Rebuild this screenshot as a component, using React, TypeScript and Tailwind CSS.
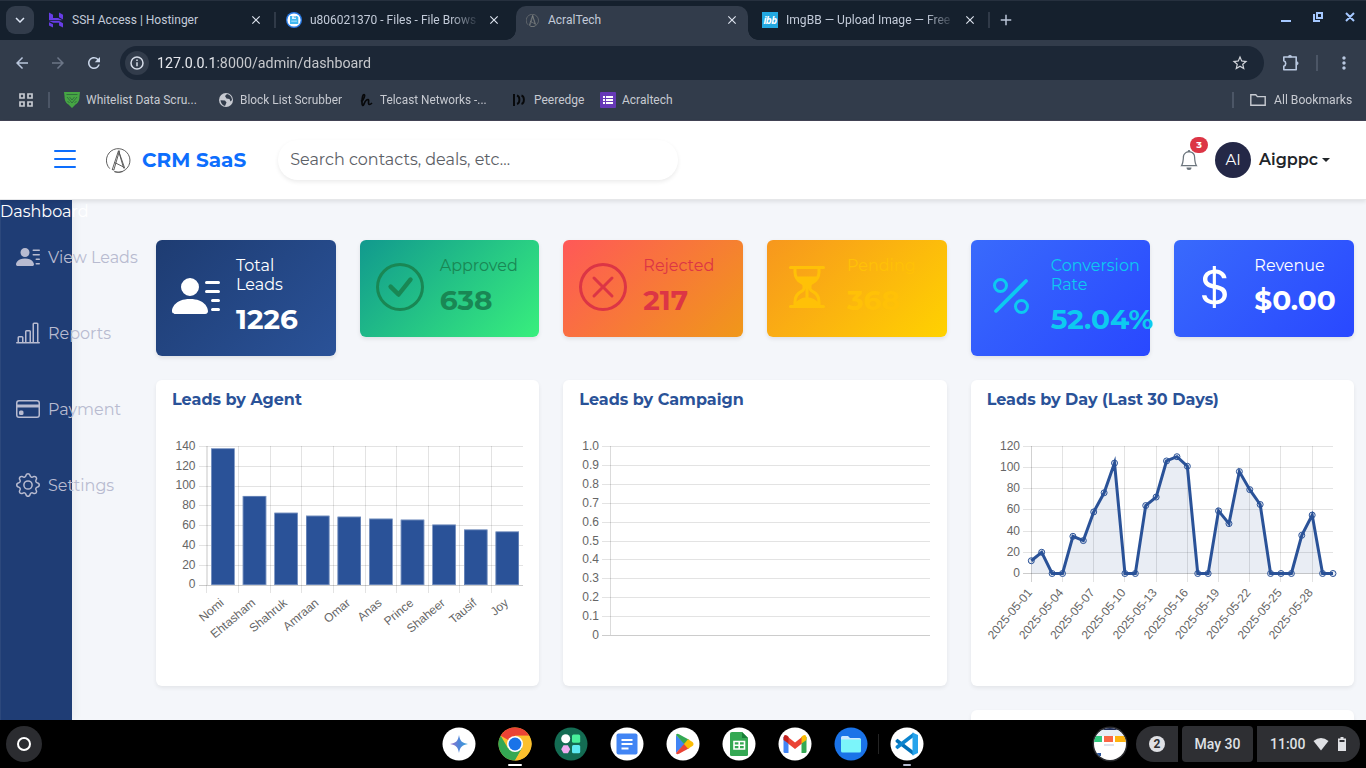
import { useLayoutEffect, useRef, type ReactNode } from "react";
import {
  BsPersonLinesFill, BsBarChartLine, BsCreditCard, BsGear, BsBell, BsList, BsCheckCircle,
  BsXCircle, BsHourglassSplit, BsPercent, BsCurrencyDollar,
} from "react-icons/bs";
import { MdArrowBack, MdArrowForward, MdRefresh, MdStarOutline, MdMoreVert, MdAdd, MdClose, MdExpandMore } from "react-icons/md";

/** Text stretched horizontally so that it takes exactly `w` pixels. */
function Fit({ w, className = "", children }: { w: number; className?: string; children: ReactNode }) {
  const ref = useRef<HTMLSpanElement>(null);
  useLayoutEffect(() => {
    const el = ref.current;
    if (el) el.style.transform = `scaleX(${w / el.offsetWidth})`;
  }, [w]);
  return (
    <span className="block shrink-0" style={{ width: w }}>
      <span ref={ref} className={`inline-block origin-left whitespace-nowrap ${className}`}>{children}</span>
    </span>
  );
}

/** Text at its natural width. */
const Txt = ({ children }: { children: ReactNode }) => <span className="block whitespace-nowrap">{children}</span>;

function AcralLogo({ className }: { className: string }) {
  return (
    <svg viewBox="0 0 24 24" className={className} fill="none" stroke="currentColor">
      <path d="M3.6 19.8A11.3 11.3 0 1 1 8 22.6" strokeWidth=".9" />
      <path d="M8.2 22.8a11.3 11.3 0 0 0 8-.2" strokeWidth=".8" />
      <path d="M6 20.8 12 2.6l5 17M7.5 21.2 13 2.5M12.2 3l5.8 16.6M8 13.8l8.8 4.4M5.8 20.6l2 .6" strokeWidth=".9" />
    </svg>
  );
}

const HostingerIcon = () => (
  <svg viewBox="0 0 16 16" className="size-4" fill="#673de6">
    <path d="M1 .5 5 2.7v3.2h5.2l4.3 2.4H1zM11 .5l4 2.2v4.8l-4-2.2zM1 8.9h10.2l3.8 2.3v4.3l-4-2.1v-2.7H5.2L1 8.9zM1 10.2l4 2.1v3.2l-4-2.1z" />
  </svg>
);
const FileBrowserIcon = () => (
  <svg viewBox="0 0 16 16" className="size-4">
    <circle cx="8" cy="8" r="8" fill="#2b7de9" /><circle cx="8" cy="8" r="6.6" fill="#fff" />
    <path d="M4 4h7l1.3 1.3V12H4z" fill="#41b8f0" /><path d="M6 4.3h4v2.6H6zM5.3 8.7h5.6v.7H5.3z" fill="#d8f2ff" /><path d="M8.6 4.6h.8V6h-.8z" fill="#1f70bd" />
  </svg>
);
const IbbIcon = () => (
  <span className="flex size-4 items-center justify-center bg-[#23a8e0] font-['Open_Sans',sans-serif] text-[10px] font-bold italic leading-none tracking-[-0.6px] text-white">ibb</span>
);

function Tab({ icon, title, w, fade }: { icon: ReactNode; title: string; w: number; fade?: boolean }) {
  return (
    <div className="flex h-6 w-[215px] items-center">
      <div className="flex w-4 shrink-0">{icon}</div>
      <div className={`ml-2 w-[168px] overflow-hidden text-[#c3cbd9] ${fade ? "[mask-image:linear-gradient(to_right,#000_140px,transparent_170px)]" : ""}`}>
        <Fit w={w}>{title}</Fit>
      </div>
      <MdClose className="ml-[9px] size-3.5 text-[#dde3ee]" />
    </div>
  );
}

function Browser() {
  return (
    <div className="h-[121px] shrink-0 border-b border-[#424354] bg-[#323c4b] font-[Roboto,sans-serif] text-xs text-[#c7cad1]">
      <div className="flex h-10 items-start border-t border-[#26303e] bg-[#15202d]">
        <div className="mt-[5px] ml-1.5 flex size-7 items-center justify-center rounded-[9px] bg-[#323c4b]">
          <MdExpandMore className="size-[18px] text-[#dde6f5]" />
        </div>
        <div className="mt-[7px] ml-3.5"><Tab icon={<HostingerIcon />} title="SSH Access | Hostinger" w={126} /></div>
        <div className="mt-[11px] ml-[11px] h-4 w-0.5 bg-[#303a48]" />
        <div className="mt-[7px] ml-[10px]"><Tab icon={<FileBrowserIcon />} title="u806021370 - Files - File Brows" w={166} fade /></div>
        <div className="ml-[5px] flex self-end">
          <div className="size-2.5 self-end bg-[radial-gradient(circle_at_0_0,#15202d_9.5px,#323c4b_10px)]" />
          <div className="h-[34px] w-[232px] rounded-t-[10px] bg-[#323c4b] pt-[2px] pl-2 text-[#e1e5ed]">
            <Tab icon={<AcralLogo className="ml-[2px] size-[13px] text-[#92938f]" />} title="AcralTech" w={53} />
          </div>
          <div className="size-2.5 self-end bg-[radial-gradient(circle_at_100%_0,#15202d_9.5px,#323c4b_10px)]" />
        </div>
        <div className="mt-[7px] ml-1"><Tab icon={<IbbIcon />} title="ImgBB — Upload Image — Free" w={164} fade /></div>
        <div className="mt-[11px] ml-[11px] h-4 w-0.5 bg-[#303a48]" />
        <MdAdd className="mt-[10px] ml-[7px] size-[18px] text-[#b9c4d6]" />
        <div className="flex-1" />
        <svg viewBox="0 0 82 16" className="mt-2 mr-2 h-4 w-[82px] shrink-0" fill="none" stroke="#a5c8ff" strokeWidth="2">
          <path d="M5 12h10M38 5v7h6M41 4h5v5h-5zM70 4l8 8M78 4l-8 8" />
        </svg>
      </div>
      <div className="flex h-[46px] items-center">
        <MdArrowBack className="ml-[13px] size-[18px] text-[#b9c6dc]" />
        <MdArrowForward className="ml-[18px] size-[18px] text-[#6c7687]" />
        <MdRefresh className="ml-[18px] size-[18px] text-[#cbd7ea]" />
        <div className="ml-[17px] flex h-[34px] w-[1144px] items-center rounded-full bg-[#1c2736]">
          <div className="ml-[5px] flex size-6 items-center justify-center rounded-full bg-[#323c4b]">
            <svg viewBox="0 0 14 14" className="size-3.5" fill="none" stroke="#d5dce8" strokeWidth="1.5"><circle cx="7" cy="7" r="6" /><path d="M7 6.200v4M7 3.500v1.400" /></svg>
          </div>
          <div className="ml-2 text-sm text-[#c6c8cc]"><Fit w={214}><span className="text-[#e5e7ec]">127.0.0.1</span>:8000/admin/dashboard</Fit></div>
          <MdStarOutline className="mr-[15px] ml-auto size-[18px] text-[#d3d6dc]" />
        </div>
        <svg viewBox="0 0 18 18" className="ml-[18px] size-[18px]" fill="none" stroke="#b9c8e0" strokeWidth="1.600" strokeLinejoin="round">
          <path d="M1.800 3h12.400v12.700H1.800v-3.400a3 3 0 0 0 0-5.600z" />
          <path d="M6.300 3a1.700 1.700 0 0 1 3.400 0zM14.400 7.600a1.700 1.700 0 0 1 0 3.400z" fill="#b9c8e0" strokeWidth=".800" />
        </svg>
        <div className="ml-4 h-4 w-0.5 bg-[#4c5666]" />
        <MdMoreVert className="ml-4 size-5 text-[#b9c8e0]" />
      </div>
      <div className="flex h-[28px] items-center">
        <svg viewBox="0 0 14 14" className="ml-[19px] size-3.5" fill="none" stroke="#c7cad1" strokeWidth="1.700"><path d="M1 1h4v4H1zM9 1h4v4H9zM1 9h4v4H1zM9 9h4v4H9z" /></svg>
        <div className="ml-[15px] h-4 w-0.5 bg-[#4c5666]" />
        <svg viewBox="0 0 16 16" className="ml-[14px] size-4"><path d="M0 0h16l-.500 4C15.500 9 14 11 11.500 12.500L8 16l-3.500-3.500C2 11 .500 9 .500 4z" fill="#46a544" /><path d="M2.500 2.500h11M3 5l5 6 5-6M5.500 5 8 8l2.500-3M3.500 9l2 2M12.500 9l-2 2" fill="none" stroke="#2f6a3c" strokeWidth=".900" /></svg>
        <div className="ml-1.5"><Fit w={111}>Whitelist Data Scru...</Fit></div>
        <svg viewBox="0 0 16 16" className="ml-[21px] size-4"><circle cx="8" cy="8" r="7" fill="#c7cad1" /><path d="M2.500 8.300 7 8.500l1.500 2L7 14Q3 13 2.500 8.300zM9 2l-2 2 1.500 2.500 3 .5 1 2.500L14 8Q13.500 3 9 2z" fill="#323c4b" /></svg>
        <div className="ml-1.5"><Fit w={102}>Block List Scrubber</Fit></div>
        <svg viewBox="0 0 14 14" className="ml-[18px] size-3.5" fill="none" stroke="#07080a" strokeWidth="1.700"><path d="M1 8.500C4 7 5.500 1.500 4 1.500S2 7 2 10s1 3 2 1c1-2.500 2-4.500 4-4.500 1.500 0-.500 5 1.500 5 1 0 1.500-.500 2.500-1.500" /></svg>
        <div className="ml-[6px]"><Fit w={107}>Telcast Networks -...</Fit></div>
        <svg viewBox="0 0 14 14" className="ml-[25px] size-3.5" fill="none" stroke="#07080a" strokeWidth="1.900"><path d="M2 1v12" /><path d="M5 2.500c3.200 1 3.200 7.500 0 8.500M9.500 2.500c3.200 1 3.200 7.500 0 8.500" /></svg>
        <div className="ml-2"><Fit w={50}>Peeredge</Fit></div>
        <svg viewBox="0 0 16 16" className="ml-4 size-4"><rect width="16" height="16" rx="1" fill="#673ab7" /><path d="M3 5h2M6 5h7M3 8h2M6 8h7M3 11h2M6 11h7" stroke="#fff" strokeWidth="1.900" /></svg>
        <div className="ml-1.5"><Fit w={51}>Acraltech</Fit></div>
        <div className="ml-auto h-4 w-0.5 bg-[#4c5666]" />
        <svg viewBox="0 0 16 12" className="ml-4 h-3 w-4" fill="none" stroke="#c7cad1" strokeWidth="1.400"><path d="M.800.800h5l1.600 1.800h7.800v8.600H.800z" /></svg>
        <div className="mr-3.5 ml-2"><Fit w={78}>All Bookmarks</Fit></div>
      </div>
    </div>
  );
}

function Header() {
  return (
    <header className="relative z-10 flex h-[79px] shrink-0 items-center border-b border-[#e6e7e9] bg-white shadow-[0_2px_4px_rgba(0,0,0,0.09)]">
      <BsList className="-mt-0.5 ml-[49px] size-8 text-[#0d6efd]" />
      <AcralLogo className="ml-[25px] size-[25px] text-[#555]" />
      <div className="ml-[11px] text-xl font-bold text-[#0d6efd]"><Txt>CRM SaaS</Txt></div>
      <div className="ml-8 flex h-10 w-[400px] items-center rounded-full bg-white pl-3 text-base text-[#5c6066] shadow-[0_2px_4px_rgba(0,0,0,0.08)]">
        <Txt>Search contacts, deals, etc...</Txt>
      </div>
      <div className="relative mr-4 ml-auto">
        <BsBell className="size-5 text-[#6c757d]" />
        <span className="absolute -top-[13px] left-[11px] flex h-4 w-[18px] items-center justify-center rounded-full bg-[#dc3545] text-[9.600px] font-bold text-white">3</span>
      </div>
      <div className="flex size-9 items-center justify-center rounded-full bg-[#242847] text-[15px] text-white"><Txt>AI</Txt></div>
      <div className="ml-2 text-base font-semibold text-[#212529]"><Txt>Aigppc</Txt></div>
      <div className="mr-9 ml-1 border-x-4 border-t-4 border-x-transparent border-t-[#212529]" />
    </header>
  );
}

const nav = [
  { Icon: BsPersonLinesFill, label: "View Leads" },
  { Icon: BsBarChartLine, label: "Reports" },
  { Icon: BsCreditCard, label: "Payment" },
  { Icon: BsGear, label: "Settings" },
];

function Sidebar() {
  return (
    <aside className="h-full w-[72px] shrink-0 border-l border-[#2c487c] bg-[#1f3d75] text-base shadow-[2px_0_10px_rgba(0,0,0,0.05)]">
      <div className="-ml-px flex h-6 items-center text-white"><Txt>Dashboard</Txt></div>
      <nav className="-ml-px flex flex-col gap-[52px] pt-[22px] pl-4 text-[#b8bbd0]">
        {nav.map(({ Icon, label }) => (
          <div key={label} className="flex h-6 items-center gap-2">
            <Icon className="-mt-0.5 size-6 shrink-0" />
            <Txt>{label}</Txt>
          </div>
        ))}
      </nav>
    </aside>
  );
}

const stats = [
  { Icon: BsPersonLinesFill, lines: ["Total", "Leads"], value: "1226", look: "bg-[linear-gradient(135deg,#1e3c72,#2a5298)] text-white h-[116px]" },
  { Icon: BsCheckCircle, lines: ["Approved"], value: "638", look: "bg-[linear-gradient(135deg,#11998e,#38ef7d)] text-[#198754] h-[97px]" },
  { Icon: BsXCircle, lines: ["Rejected"], value: "217", look: "bg-[linear-gradient(135deg,#ff5858,#f09819)] text-[#dc3545] h-[97px]" },
  { Icon: BsHourglassSplit, lines: ["Pending"], value: "368", look: "bg-[linear-gradient(135deg,#f7971e,#ffd200)] text-[#ffc107] h-[97px]" },
  { Icon: BsPercent, lines: ["Conversion", "Rate"], value: "52.04%", look: "bg-[linear-gradient(135deg,#396afc,#2948ff)] text-[#0dcaf0] h-[116px]" },
  { Icon: BsCurrencyDollar, lines: ["Revenue"], value: "$0.00", look: "bg-[linear-gradient(135deg,#396afc,#2948ff)] text-white h-[97px]" },
];

function StatCards() {
  return (
    <div className="grid grid-cols-6 items-start gap-6">
      {stats.map(({ Icon, lines, value, look }) => (
        <div key={value} className={`flex items-center gap-4 rounded-md px-4 shadow-[0_2px_4px_rgba(0,0,0,0.09)] ${look}`}>
          <Icon className={`size-12 shrink-0 ${lines.length > 1 ? "-mt-1" : "-mt-[3px]"}`} />
          <div className="-mt-1">
            <div className="text-base leading-[19.200px]">
              {lines.map((t) => <Txt key={t}>{t}</Txt>)}
            </div>
            <div className="mt-[9px] text-[28px] leading-[33.600px] font-bold"><Txt>{value}</Txt></div>
          </div>
        </div>
      ))}
    </div>
  );
}

const chartClass = "block h-[266px] w-full font-['Liberation_Sans',Arial,sans-serif] text-[12px]";
const grid = "rgba(0,0,0,0.11)";
const agents: [string, number][] = [["Nomi", 138], ["Ehtasham", 90], ["Shahruk", 73], ["Amraan", 70], ["Omar", 69], ["Anas", 67], ["Prince", 66], ["Shaheer", 61], ["Tausif", 56], ["Joy", 54]];

function AgentChart() {
  const y = (v: number) => 585 - v * 0.9893;
  return (
    <svg viewBox="156 420 383 266" preserveAspectRatio="xMinYMin" className={chartClass}>
      {[0, 20, 40, 60, 80, 100, 120, 140].map((v) => (
        <g key={v}>
          <path d={`M199 ${Math.floor(y(v)) + 0.5}H523`} stroke={v ? grid : "rgba(0,0,0,0.2)"} />
          <text x="195.500" y={y(v) + 3.3} textAnchor="end" fill="#666">{v}</text>
        </g>
      ))}
      <path d="M207.500 446V585" stroke={grid} />
      {agents.map(([name, v], i) => {
        const left = 207.1 + i * 31.6;
        return (
          <g key={name}>
            <path d={`M${i ? Math.floor(left) + 0.5 : 206.5} 446V593`} stroke={grid} />
            <rect x={left + 4.1} y={y(v)} width="23.400" height={v * 0.9893} fill="#2a5298" />
            <rect x={left + 4.4} y={y(v) + 0.3} width="22.800" height={v * 0.9893 - 0.6} fill="none" stroke="#8ca3cb" strokeWidth=".600" />
            <text transform={`translate(${left + 12.4} 598) rotate(-40)`} y="8" textAnchor="end" fill="#666">{name}</text>
          </g>
        );
      })}
    </svg>
  );
}

function CampaignChart() {
  return (
    <svg viewBox="563 420 383 266" preserveAspectRatio="xMinYMin" className={chartClass}>
      {Array.from({ length: 11 }, (_, i) => {
        const y = Math.round(446 + i * 18.9) + 0.5;
        return (
          <g key={i}>
            <path d={`M602 ${y}H930`} stroke={i === 10 ? "rgba(0,0,0,0.2)" : grid} />
            <text x="599" y={y + 3.3} textAnchor="end" fill="#666">{i === 10 ? "0" : (1 - i / 10).toFixed(1)}</text>
          </g>
        );
      })}
      <path d="M610.500 446V635" stroke="rgba(0,0,0,0.14)" />
    </svg>
  );
}

const days = [12, 20, 0, 0, 35, 31, 58, 76, 104, 0, 0, 64, 72, 106, 110, 101, 0, 0, 59, 47, 96, 79, 65, 0, 0, 0, 36, 55, 0, 0];

function DayChart() {
  const x = (i: number) => 1031.3 + i * 10.403;
  const y = (v: number) => 573.5 - v * 1.0617;
  const line = days.map((v, i) => `${i ? "L" : "M"}${x(i)} ${y(v)}`).join("");
  return (
    <svg viewBox="971 420 383 266" preserveAspectRatio="xMinYMin" className={chartClass}>
      {[0, 20, 40, 60, 80, 100, 120].map((v) => (
        <g key={v}>
          <path d={`M1023 ${Math.floor(y(v)) + 0.5}H1333`} stroke={v ? grid : "rgba(0,0,0,0.2)"} />
          <text x="1020" y={y(v) + 3.5} textAnchor="end" fill="#666">{v}</text>
        </g>
      ))}
      {days.map((_, i) => i % 3 === 0 && i < 28 && (
        <g key={i}>
          <path d={`M${Math.floor(x(i)) + 0.5} 446V582`} stroke={i ? grid : "rgba(0,0,0,0.18)"} />
          <text transform={`translate(${x(i) - 4} 587) rotate(-50)`} y="8" x="-1" textAnchor="end" fill="#666">{`2025-05-${String(i + 1).padStart(2, "0")}`}</text>
        </g>
      ))}
      <path d={`${line}V573.500H1031.300z`} fill="rgba(42,82,152,0.1)" />
      <path d={line} fill="none" stroke="#2a5298" strokeWidth="3" strokeLinejoin="miter" strokeMiterlimit="10" />
      {days.map((v, i) => <circle key={i} cx={x(i)} cy={y(v)} r="3" fill="rgba(42,82,152,0.1)" stroke="#2a5298" />)}
    </svg>
  );
}

function Panel({ title, children }: { title: string; children: ReactNode }) {
  return (
    <section className="h-[306px] rounded-md bg-white shadow-[0_2px_4px_rgba(0,0,0,0.07)]">
      <h5 className="flex h-10 items-center pl-4 text-base font-bold text-[#2a5298]"><Txt>{title}</Txt></h5>
      {children}
    </section>
  );
}

const shelfIcons: ReactNode[] = [
  <>
    <defs><linearGradient id="gem"><stop stopColor="#9b72cb" /><stop offset=".500" stopColor="#4f85d9" /><stop offset="1" stopColor="#38a4d8" /></linearGradient></defs>
    <circle cx="17" cy="17" r="16.500" fill="#fff" /><path d="M17 8c1 6 3 8 9 9-6 1-8 3-9 9-1-6-3-8-9-9 6-1 8-3 9-9z" fill="url(#gem)" />
  </>,
  <>
    <circle cx="17" cy="17" r="16.500" fill="#fbc02d" />
    <path d="M17 17 2.700 8.750A16.500 16.500 0 0 1 31.300 8.750H17z" fill="#ea4335" />
    <path d="M2.700 8.750A16.500 16.500 0 0 0 17 33.500L24.150 21.100 17 17 9.850 21.100z" fill="#34a853" />
    <path d="M31.300 8.750H17l7.150 12.400L17 33.500A16.500 16.500 0 0 0 31.300 8.750z" fill="#fbc02d" />
    <circle cx="17" cy="17" r="8" fill="#fff" /><circle cx="17" cy="17" r="6.400" fill="#1a73e8" />
  </>,
  <>
    <circle cx="17" cy="17" r="16.500" fill="#146c53" /><circle cx="11.700" cy="11.700" r="4.500" fill="#fff" />
    <rect x="18" y="7.500" width="8.200" height="8.200" rx="1.500" fill="#48f09c" /><path d="m9.500 18.200h4.400l2.300 4-2.300 4H9.500l-2.300-4z" fill="#efacef" />
    <rect x="18" y="18" width="8.200" height="8.200" rx="1.500" fill="#5deaf2" />
  </>,
  <>
    <circle cx="17" cy="17" r="16.500" fill="#fff" /><rect x="6.500" y="6.500" width="21" height="21" rx="2" fill="#4285f4" />
    <path d="M11.500 13h11M11.500 17h11M11.500 21.500h7" stroke="#fff" strokeWidth="2.200" />
  </>,
  <>
    <circle cx="17" cy="17" r="16.500" fill="#fff" /><path d="M10 8v18l9-9z" fill="#4285f4" /><path d="M10 8q.700-2 3-.800L23.500 13 18.500 17.500z" fill="#34a853" />
    <path d="M10 26q.700 2 3 .800L23.500 21 18.500 16.500z" fill="#ea4335" /><path d="M22 12.200l4.500 2.700q2 2.100 0 4.200L22 21.800 18 17z" fill="#fbbc04" />
  </>,
  <>
    <circle cx="17" cy="17" r="16.500" fill="#fff" /><path d="M10 5h10l6 6v16.500q0 1.500-1.500 1.500h-15Q8 29 8 27.500v-21Q8 5 10 5z" fill="#34a853" /><path d="M20 5v6h6z" fill="#188038" />
    <path d="M12 14.500h10.500v7.500H12zM12 18.200h10.500M17.200 14.500V22" fill="none" stroke="#fff" strokeWidth="1.600" />
  </>,
  <>
    <circle cx="17" cy="17" r="16.500" fill="#fff" /><path d="M5.500 10h5v16H7q-1.500 0-1.500-1.500z" fill="#4285f4" /><path d="M23.500 10h5v14.500q0 1.500-1.500 1.500h-3.500z" fill="#34a853" />
    <path d="m10 10 7 5.500 7-5.500v6.500l-7 5.500-7-5.500z" fill="#ea4335" /><path d="M5.500 13v-2.500Q6 7 9 8.500l1.500 1.300v6.700z" fill="#c5221f" /><path d="M28.500 13v-2.500Q28 7 25 8.500l-1.500 1.300v6.700z" fill="#fbbc04" />
  </>,
  <>
    <circle cx="17" cy="17" r="16.500" fill="#1a73e8" /><path d="M7 14V10.500Q7 9 8.500 9H14l2 2h9.500q1.500 0 1.500 1.500V14" fill="#c9e9ff" />
    <path d="M7 12.500h20v11.500q0 1.500-1.500 1.500h-17Q7 25.500 7 24z" fill="#7bf5fa" />
  </>,
  <>
    <circle cx="17" cy="17" r="16.500" fill="#fff" /><path d="m5.500 13.500 2-1.800L23.500 24v4.500L5.700 15z" fill="#0070b8" /><path d="m5.500 20.500 2 1.800L23.500 10V5.500L5.700 19z" fill="#0b84cf" />
    <path d="m22.500 5.500 5.500 2.600v17.800l-5.500 2.600z" fill="#26a3ec" />
  </>,
];

function Shelf() {
  return (
    <footer className="flex h-12 shrink-0 items-center bg-black font-[Roboto,sans-serif] text-sm font-medium text-[#dfe0e4]">
      <div className="ml-1.5 flex size-9 items-center justify-center rounded-full bg-[#2b2c30]"><div className="size-3.5 rounded-full border-2 border-white" /></div>
      <div className="ml-[400px] flex gap-[22px]">
        {shelfIcons.map((art, i) => (
          <div key={i} className="relative">
            {i === 8 && <span className="absolute top-[7px] -left-3 h-5 w-px bg-[#242424]" />}
            <svg viewBox="0 0 34 34" className="size-[34px]">{art}</svg>
            {i === 1 && <span className="absolute top-[37px] left-[10px] h-0.5 w-3.5 rounded bg-white" />}
            {i === 8 && <span className="absolute top-[37px] left-[13px] h-0.5 w-2 rounded bg-[#b7bdd0]" />}
          </div>
        ))}
      </div>
      <svg viewBox="0 0 36 36" className="mr-2 ml-auto size-9">
        <clipPath id="thumb"><circle cx="18" cy="18" r="16" /></clipPath>
        <circle cx="18" cy="18" r="17.500" fill="#2b2c30" />
        <g clipPath="url(#thumb)">
          <path d="M0 0h36v36H0z" fill="#fff" /><path d="M0 0h36v4H0z" fill="#1f2c56" /><path d="M0 4h36v6H0z" fill="#e8edf5" />
          <path d="M0 10h10v6H0z" fill="#2fca7d" /><path d="M12 10h9v6h-9z" fill="#fa6545" /><path d="M23 10h13v6H23z" fill="#fdb30f" />
          <path d="M3 27h6v3H3z" fill="#2a5298" /><path d="M12 19h10" stroke="#b9c5db" />
        </g>
      </svg>
      <div className="flex h-9 w-[42px] items-center justify-center rounded-l-full rounded-r bg-[#2e2f33]">
        <span className="flex size-4 items-center justify-center rounded-full bg-[#dfe0e4] text-xs font-bold text-[#2e2f33]">2</span>
      </div>
      <div className="ml-1 flex h-9 w-[71px] items-center justify-center rounded bg-[#2e2f33]"><Fit w={46}>May 30</Fit></div>
      <div className="mr-1.5 ml-1 flex h-9 w-[103px] items-center rounded-l rounded-r-full bg-[#2e2f33] pl-[13px]">
        <Fit w={36}>11:00</Fit>
        <svg viewBox="0 0 16 14" className="ml-[7px] h-3.5 w-4" fill="#dfe0e4"><path d="M8 13.500.500 4q7.500-6 15 0z" /></svg>
        <svg viewBox="0 0 8 14" className="ml-[9px] h-3.5 w-2"><path d="M2.500 0h3v1.500H8V14H0V1.500h2.500z" fill="#dfe0e4" /><path d="M1.500 3h5v2h-5z" fill="#2e2f33" /></svg>
      </div>
    </footer>
  );
}

export default function App() {
  return (
    <div className="flex h-[768px] w-[1366px] flex-col overflow-hidden">
      <Browser />
      <div className="flex min-h-0 flex-1 flex-col bg-[#f4f6fa] font-[Montserrat,Inter,sans-serif]">
        <Header />
        <div className="flex min-h-0 flex-1">
          <Sidebar />
          <main className="min-w-0 flex-1 overflow-hidden pt-10 pr-3 pl-[84px]">
            <StatCards />
            <div className="mt-6 grid grid-cols-3 gap-6">
              <Panel title="Leads by Agent"><AgentChart /></Panel>
              <Panel title="Leads by Campaign"><CampaignChart /></Panel>
              <Panel title="Leads by Day (Last 30 Days)"><DayChart /></Panel>
              <div className="col-start-3 h-20 rounded-md bg-white shadow-[0_2px_4px_rgba(0,0,0,0.07)]" />
            </div>
          </main>
        </div>
      </div>
      <Shelf />
    </div>
  );
}
